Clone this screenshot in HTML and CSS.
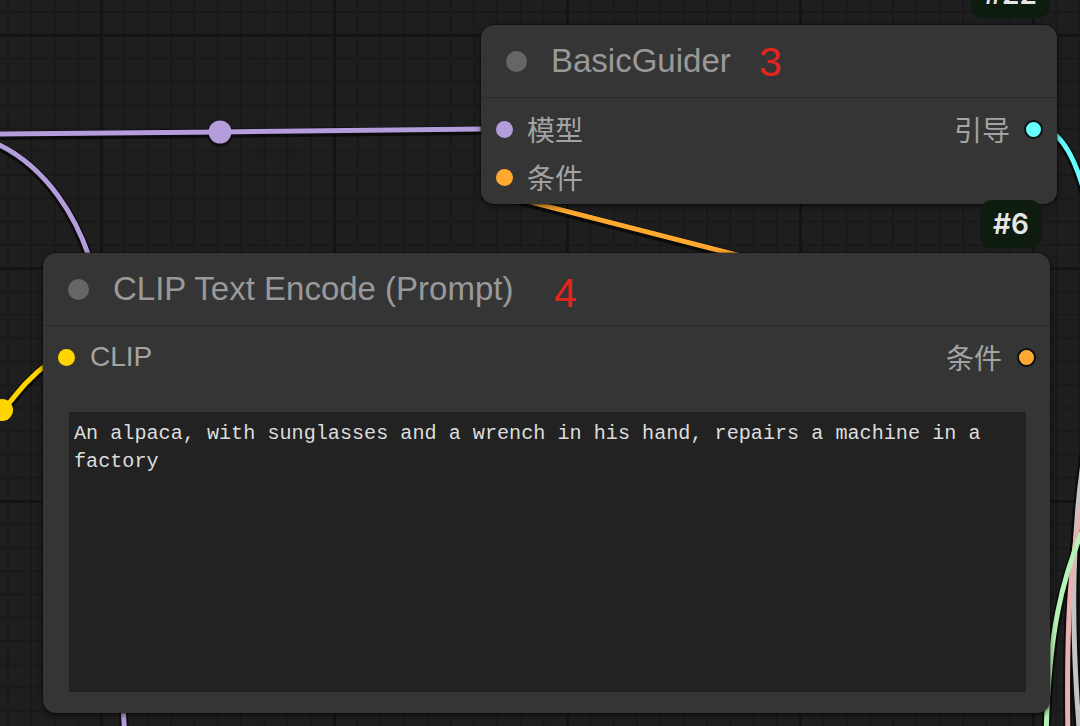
FILE: index.html
```html
<!DOCTYPE html>
<html lang="zh">
<head>
<meta charset="utf-8">
<title>ComfyUI canvas</title>
<link rel="stylesheet" href="styles.css">
</head>
<body>
<div class="canvas">
  <svg class="wires" width="1080" height="726" viewBox="0 0 1080 726" xmlns="http://www.w3.org/2000/svg">
    <g class="shadow" transform="translate(0,1.5)">
      <path d="M -5 134 L 220 132 L 482 129" stroke-width="9"/>
      <path d="M -12 140 C 40 160, 85 215, 100 300 L 125 740" stroke-width="9"/>
      <path d="M 2 412 C 18 392, 28 378, 50 362" stroke-width="9"/>
      <path d="M 505 195.5 L 780 266" stroke-width="9"/>
      <path d="M 1040 128 C 1062 130, 1078 160, 1090 215" stroke-width="9"/>
      <path d="M 1090 420 C 1071 520, 1070 620, 1080 740" stroke-width="10"/>
      <path d="M 1088 480 C 1070 545, 1066 620, 1068 740" stroke-width="9"/>
      <path d="M 1092 510 C 1060 575, 1048 640, 1046 740" stroke-width="9"/>
      <circle cx="220" cy="132" r="13"/>
    </g>
    <g class="wire">
      <path d="M -5 134 L 220 132 L 482 129" stroke="#b39ddb"/>
      <path d="M -12 140 C 40 160, 85 215, 100 300 L 125 740" stroke="#b39ddb"/>
      <path d="M 2 412 C 18 392, 28 378, 50 362" stroke="#ffd500"/>
      <path d="M 505 195.5 L 780 266" stroke="#ffa931"/>
      <path d="M 1040 128 C 1062 130, 1078 160, 1090 215" stroke="#66ffff"/>
      <path d="M 1090 420 C 1071 520, 1070 620, 1080 740" stroke="#c4c4c4" stroke-width="7"/>
      <path d="M 1088 480 C 1070 545, 1066 620, 1068 740" stroke="#e8b2b2"/>
      <path d="M 1092 510 C 1060 575, 1048 640, 1046 740" stroke="#b6f2b6"/>
    </g>
    <circle cx="220" cy="132" r="11.5" fill="#b39ddb"/>
    <circle cx="2" cy="410" r="11" fill="#ffd500"/>
  </svg>

  <div class="badge badge-22">#22</div>

  <div class="node node-guider">
    <div class="node-title">
      <span class="title-dot"></span>
      <span class="title-text">BasicGuider</span>
    </div>
    <div class="node-body">
      <div class="slot-row">
        <div class="slot"><span class="dot dot-purple"></span><span class="slot-label">模型</span></div>
        <div class="slot"><span class="slot-label">引导</span><span class="dot dot-out dot-cyan"></span></div>
      </div>
      <div class="slot-row">
        <div class="slot"><span class="dot dot-orange"></span><span class="slot-label">条件</span></div>
      </div>
    </div>
    <span class="anno anno-guider">3</span>
  </div>

  <div class="badge badge-6">#6</div>

  <div class="node node-clip">
    <div class="node-title">
      <span class="title-dot"></span>
      <span class="title-text">CLIP Text Encode (Prompt)</span>
    </div>
    <div class="node-body">
      <div class="slot-row">
        <div class="slot"><span class="dot dot-yellow"></span><span class="slot-label">CLIP</span></div>
        <div class="slot"><span class="slot-label">条件</span><span class="dot dot-out dot-orange"></span></div>
      </div>
      <textarea class="prompt" spellcheck="false">An alpaca, with sunglasses and a wrench in his hand, repairs a machine in a factory</textarea>
    </div>
    <span class="anno anno-clip">4</span>
  </div>
</div>
</body>
</html>
```

FILE: styles.css
```css
html, body {
  margin: 0;
  padding: 0;
  background: #1e1e1e;
}

.canvas {
  position: relative;
  width: 1080px;
  height: 726px;
  overflow: hidden;
  font-family: "Liberation Sans", "Noto Sans CJK SC", sans-serif;
  background-color: #1e1e1e;
  background-image:
    linear-gradient(to right, #141414 3px, transparent 3px),
    linear-gradient(to bottom, #141414 3px, transparent 3px),
    linear-gradient(to right, #191919 2px, transparent 2px),
    linear-gradient(to bottom, #191919 2px, transparent 2px);
  background-size: 233px 233px, 233px 233px, 23.3px 23.3px, 23.3px 23.3px;
  background-position: 100px 0, 0 34px, 7px 0, 0 11px;
}

.wires {
  position: absolute;
  left: 0;
  top: 0;
}

.wires path {
  fill: none;
  stroke-linecap: round;
}

.wires .shadow path {
  stroke: rgba(0, 0, 0, 0.6);
}

.wires .shadow circle {
  fill: rgba(0, 0, 0, 0.5);
}

.wires .wire path {
  stroke-width: 5;
}

/* nodes */
.node {
  position: absolute;
  box-sizing: border-box;
  background: #353535;
  border-radius: 13px;
  box-shadow: 0 0 0 1px rgba(0, 0, 0, 0.25), 0 2px 6px rgba(0, 0, 0, 0.55);
  display: flex;
  flex-direction: column;
}

.node-guider {
  left: 481px;
  top: 25px;
  width: 576px;
  height: 179px;
}

.node-clip {
  left: 43px;
  top: 253px;
  width: 1007px;
  height: 460px;
}

.node-title {
  height: 72px;
  flex: none;
  display: flex;
  align-items: center;
  gap: 24px;
  padding-left: 25px;
  border-bottom: 1px solid #2b2b2b;
}

.title-dot {
  width: 21px;
  height: 21px;
  border-radius: 50%;
  background: #666666;
  flex: none;
}

.title-text {
  font-size: 33px;
  color: #999999;
  white-space: nowrap;
}

.node-body {
  display: flex;
  flex-direction: column;
  padding: 7px 14px 3px 15px;
}

.node-clip .node-body {
  padding: 7px 24px 21px 15px;
  flex: 1;
}

.slot-row {
  height: 48px;
  display: flex;
  align-items: center;
  justify-content: space-between;
}

.node-clip .slot-row {
  margin-right: -10px;
}

.node-clip .slot {
  gap: 15px;
}

.slot {
  display: flex;
  align-items: center;
  gap: 14px;
}

.slot-label {
  font-size: 28px;
  color: #a3a3a3;
  white-space: nowrap;
}

.dot {
  width: 17px;
  height: 17px;
  border-radius: 50%;
  flex: none;
  box-sizing: border-box;
}

.dot-out {
  width: 19px;
  height: 19px;
  border: 2px solid #101010;
}

.dot-purple { background: #b39ddb; }
.dot-orange { background: #ffa931; }
.dot-yellow { background: #ffd500; }
.dot-cyan { background: #66ffff; }

.prompt {
  display: block;
  margin: 31px 0 0 11px;
  height: 280px;
  box-sizing: border-box;
  border: none;
  outline: none;
  resize: none;
  overflow: hidden;
  background: #222222;
  color: #dddddd;
  font-family: "Liberation Mono", monospace;
  font-size: 20.15px;
  line-height: 28px;
  padding: 8px 5px;
}

/* annotations & badges */
.anno {
  position: absolute;
  font-family: "Liberation Sans", sans-serif;
  font-size: 41px;
  line-height: 41px;
  color: #e5241b;
}

.anno-guider {
  left: 278px;
  top: 17px;
}

.anno-clip {
  left: 511px;
  top: 20px;
}

.badge {
  position: absolute;
  height: 48px;
  box-sizing: border-box;
  border-radius: 12px;
  background: #0e1c10;
  color: #e6e6e6;
  font-family: "Inter", "Liberation Sans", sans-serif;
  font-weight: 600;
  font-size: 28px;
  display: flex;
  align-items: center;
  justify-content: center;
}

.badge-22 {
  left: 971px;
  top: -30px;
  width: 79px;
}

.badge-6 {
  left: 980px;
  top: 200px;
  width: 62px;
}
```
